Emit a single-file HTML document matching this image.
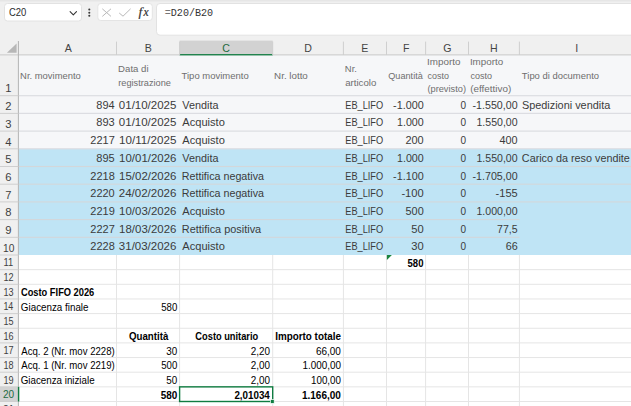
<!DOCTYPE html>
<html lang="it">
<head>
<meta charset="utf-8">
<title>Excel - Costo FIFO 2026</title>
<style>
html,body{margin:0;padding:0;background:#fff;overflow:hidden;}
body{width:631px;height:406px;font-family:"Liberation Sans",sans-serif;}
svg{display:block;font-family:"Liberation Sans",sans-serif;}
text{white-space:pre;}
</style>
</head>
<body>
<svg width="631" height="406" viewBox="0 0 631 406">
<rect x="0.00" y="0.00" width="631.00" height="406.00" fill="#ffffff" />
<rect x="0.00" y="0.00" width="631.00" height="55.00" fill="#f0f0f0" />
<rect x="0.00" y="0.00" width="631.00" height="1.50" fill="#e6e6e6" />
<rect x="4.5" y="3.5" width="77" height="17.5" rx="3" fill="#fff" stroke="#e2e2e2" stroke-width="1"/>
<text x="8.90" y="15.80" font-size="11" fill="#2b2b2b" textLength="17.30" lengthAdjust="spacingAndGlyphs">C20</text>
<path d="M70.1 11.6 L73.3 14.9 L76.5 11.6" fill="none" stroke="#333" stroke-width="1.05" stroke-linecap="round" stroke-linejoin="round"/>
<circle cx="89.3" cy="9.5" r="1.05" fill="#3a3a3a"/>
<circle cx="89.3" cy="12.7" r="1.05" fill="#3a3a3a"/>
<circle cx="89.3" cy="15.8" r="1.05" fill="#3a3a3a"/>
<rect x="97.8" y="3.5" width="54.5" height="17" rx="3" fill="#fff" stroke="#e4e4e4" stroke-width="1"/>
<path d="M102.3 8.8 L111 16.4 M111 8.8 L102.3 16.4" fill="none" stroke="#b9b9b9" stroke-width="1"/>
<path d="M119.2 13 L123 16.2 L130.6 8.8" fill="none" stroke="#b9b9b9" stroke-width="1"/>
<text x="138.40" y="16.00" font-size="13.5" fill="#333" font-style="italic" font-family="Liberation Serif, sans-serif" stroke="#333" stroke-width="0.2">f</text>
<text x="143.40" y="16.00" font-size="11.5" fill="#333" font-style="italic" font-family="Liberation Serif, sans-serif" stroke="#333" stroke-width="0.2">x</text>
<rect x="156.5" y="3.5" width="490" height="31.7" rx="3.5" fill="#fff" stroke="#e2e2e2" stroke-width="1"/>
<text x="164.80" y="15.60" font-size="10.7" fill="#333" textLength="48.30" lengthAdjust="spacingAndGlyphs" font-family="Liberation Mono, monospace"><tspan fill="#777">=</tspan>D20/B20</text>
<rect x="0.00" y="41.00" width="631.00" height="14.00" fill="#f0f0f0" />
<rect x="179.60" y="40.60" width="93.10" height="14.40" fill="#d2d2d2" />
<rect x="0.00" y="54.50" width="631.00" height="1.20" fill="#bfbfbf" />
<rect x="179.60" y="54.10" width="93.10" height="1.70" fill="#107c41" />
<rect x="18.00" y="41.60" width="1.00" height="13.40" fill="#cfcfcf" />
<rect x="116.00" y="41.60" width="1.00" height="13.40" fill="#cfcfcf" />
<rect x="179.10" y="41.60" width="1.00" height="13.40" fill="#cfcfcf" />
<rect x="272.20" y="41.60" width="1.00" height="13.40" fill="#cfcfcf" />
<rect x="342.90" y="41.60" width="1.00" height="13.40" fill="#cfcfcf" />
<rect x="386.00" y="41.60" width="1.00" height="13.40" fill="#cfcfcf" />
<rect x="425.10" y="41.60" width="1.00" height="13.40" fill="#cfcfcf" />
<rect x="468.00" y="41.60" width="1.00" height="13.40" fill="#cfcfcf" />
<rect x="518.90" y="41.60" width="1.00" height="13.40" fill="#cfcfcf" />
<path d="M6.9 52.8 L16.6 52.8 L16.6 43.6 Z" fill="#b7b7b7"/>
<text x="68.20" y="51.90" font-size="10.6" fill="#444" text-anchor="middle">A</text>
<text x="148.20" y="51.90" font-size="10.6" fill="#444" text-anchor="middle">B</text>
<text x="226.00" y="51.90" font-size="10.6" fill="#1e6b41" text-anchor="middle">C</text>
<text x="308.00" y="51.90" font-size="10.6" fill="#444" text-anchor="middle">D</text>
<text x="364.90" y="51.90" font-size="10.6" fill="#444" text-anchor="middle">E</text>
<text x="406.20" y="51.90" font-size="10.6" fill="#444" text-anchor="middle">F</text>
<text x="447.30" y="51.90" font-size="10.6" fill="#444" text-anchor="middle">G</text>
<text x="493.90" y="51.90" font-size="10.6" fill="#444" text-anchor="middle">H</text>
<text x="576.80" y="51.90" font-size="10.6" fill="#444" text-anchor="middle">I</text>
<rect x="0.00" y="55.50" width="18.50" height="351.00" fill="#f0f0f0" />
<rect x="0.00" y="386.85" width="18.50" height="14.65" fill="#d2d2d2" />
<rect x="18.50" y="55.50" width="612.50" height="93.30" fill="#f6f7f9" />
<rect x="18.50" y="148.80" width="612.50" height="106.20" fill="#bfe4f5" />
<rect x="18.50" y="95.10" width="612.50" height="1.20" fill="#dcdde2" />
<rect x="18.50" y="112.80" width="612.50" height="1.20" fill="#dcdde2" />
<rect x="18.50" y="130.50" width="612.50" height="1.20" fill="#dcdde2" />
<rect x="18.50" y="148.20" width="612.50" height="1.20" fill="#dcdde2" />
<rect x="18.50" y="165.95" width="612.50" height="1.10" fill="#d3d7da" />
<rect x="18.50" y="183.65" width="612.50" height="1.10" fill="#d3d7da" />
<rect x="18.50" y="201.35" width="612.50" height="1.10" fill="#d3d7da" />
<rect x="18.50" y="219.05" width="500.90" height="1.10" fill="#d3d7da" />
<rect x="18.50" y="236.75" width="500.90" height="1.10" fill="#d3d7da" />
<rect x="18.50" y="269.15" width="612.50" height="1.00" fill="#e5e5e5" />
<rect x="18.50" y="283.80" width="612.50" height="1.00" fill="#e5e5e5" />
<rect x="18.50" y="298.45" width="612.50" height="1.00" fill="#e5e5e5" />
<rect x="18.50" y="313.10" width="612.50" height="1.00" fill="#e5e5e5" />
<rect x="18.50" y="327.75" width="612.50" height="1.00" fill="#e5e5e5" />
<rect x="18.50" y="342.40" width="612.50" height="1.00" fill="#e5e5e5" />
<rect x="18.50" y="357.05" width="612.50" height="1.00" fill="#e5e5e5" />
<rect x="18.50" y="371.70" width="612.50" height="1.00" fill="#e5e5e5" />
<rect x="18.50" y="386.35" width="612.50" height="1.00" fill="#e5e5e5" />
<rect x="18.50" y="401.00" width="612.50" height="1.00" fill="#e5e5e5" />
<rect x="18.50" y="415.65" width="612.50" height="1.00" fill="#e5e5e5" />
<rect x="116.00" y="255.00" width="1.00" height="151.00" fill="#e5e5e5" />
<rect x="179.10" y="255.00" width="1.00" height="151.00" fill="#e5e5e5" />
<rect x="272.20" y="255.00" width="1.00" height="151.00" fill="#e5e5e5" />
<rect x="342.90" y="255.00" width="1.00" height="151.00" fill="#e5e5e5" />
<rect x="386.00" y="255.00" width="1.00" height="151.00" fill="#e5e5e5" />
<rect x="425.10" y="255.00" width="1.00" height="151.00" fill="#e5e5e5" />
<rect x="468.00" y="255.00" width="1.00" height="151.00" fill="#e5e5e5" />
<rect x="518.90" y="255.00" width="1.00" height="151.00" fill="#e5e5e5" />
<rect x="17.90" y="41.00" width="1.00" height="365.00" fill="#b4b4b4" />
<rect x="0.00" y="95.20" width="18.50" height="1.00" fill="#cfcfcf" />
<rect x="0.00" y="112.90" width="18.50" height="1.00" fill="#cfcfcf" />
<rect x="0.00" y="130.60" width="18.50" height="1.00" fill="#cfcfcf" />
<rect x="0.00" y="148.30" width="18.50" height="1.00" fill="#cfcfcf" />
<rect x="0.00" y="166.00" width="18.50" height="1.00" fill="#cfcfcf" />
<rect x="0.00" y="183.70" width="18.50" height="1.00" fill="#cfcfcf" />
<rect x="0.00" y="201.40" width="18.50" height="1.00" fill="#cfcfcf" />
<rect x="0.00" y="219.10" width="18.50" height="1.00" fill="#cfcfcf" />
<rect x="0.00" y="236.80" width="18.50" height="1.00" fill="#cfcfcf" />
<rect x="0.00" y="254.50" width="18.50" height="1.00" fill="#cfcfcf" />
<rect x="0.00" y="269.15" width="18.50" height="1.00" fill="#cfcfcf" />
<rect x="0.00" y="283.80" width="18.50" height="1.00" fill="#cfcfcf" />
<rect x="0.00" y="298.45" width="18.50" height="1.00" fill="#cfcfcf" />
<rect x="0.00" y="313.10" width="18.50" height="1.00" fill="#cfcfcf" />
<rect x="0.00" y="327.75" width="18.50" height="1.00" fill="#cfcfcf" />
<rect x="0.00" y="342.40" width="18.50" height="1.00" fill="#cfcfcf" />
<rect x="0.00" y="357.05" width="18.50" height="1.00" fill="#cfcfcf" />
<rect x="0.00" y="371.70" width="18.50" height="1.00" fill="#cfcfcf" />
<rect x="0.00" y="386.35" width="18.50" height="1.00" fill="#cfcfcf" />
<rect x="0.00" y="401.00" width="18.50" height="1.00" fill="#cfcfcf" />
<rect x="0.00" y="415.65" width="18.50" height="1.00" fill="#cfcfcf" />
<rect x="17.90" y="386.85" width="1.40" height="14.65" fill="#107c41" />
<text x="8.30" y="92.40" font-size="11.2" fill="#3f3f3f" text-anchor="middle">1</text>
<text x="8.30" y="110.10" font-size="11.2" fill="#3f3f3f" text-anchor="middle">2</text>
<text x="8.30" y="127.80" font-size="11.2" fill="#3f3f3f" text-anchor="middle">3</text>
<text x="8.30" y="145.50" font-size="11.2" fill="#3f3f3f" text-anchor="middle">4</text>
<text x="8.30" y="163.20" font-size="11.2" fill="#3f3f3f" text-anchor="middle">5</text>
<text x="8.30" y="180.90" font-size="11.2" fill="#3f3f3f" text-anchor="middle">6</text>
<text x="8.30" y="198.60" font-size="11.2" fill="#3f3f3f" text-anchor="middle">7</text>
<text x="8.30" y="216.30" font-size="11.2" fill="#3f3f3f" text-anchor="middle">8</text>
<text x="8.30" y="234.00" font-size="11.2" fill="#3f3f3f" text-anchor="middle">9</text>
<text x="3.10" y="251.70" font-size="11.2" fill="#3f3f3f" textLength="11.40" lengthAdjust="spacingAndGlyphs">10</text>
<text x="3.44" y="266.45" font-size="10.9" fill="#3f3f3f" textLength="9.69" lengthAdjust="spacingAndGlyphs">11</text>
<text x="3.40" y="281.10" font-size="10.9" fill="#3f3f3f" textLength="10.15" lengthAdjust="spacingAndGlyphs">12</text>
<text x="3.41" y="295.75" font-size="10.9" fill="#3f3f3f" textLength="10.09" lengthAdjust="spacingAndGlyphs">13</text>
<text x="3.42" y="310.40" font-size="10.9" fill="#3f3f3f" textLength="9.94" lengthAdjust="spacingAndGlyphs">14</text>
<text x="3.41" y="325.05" font-size="10.9" fill="#3f3f3f" textLength="10.07" lengthAdjust="spacingAndGlyphs">15</text>
<text x="3.41" y="339.70" font-size="10.9" fill="#3f3f3f" textLength="10.09" lengthAdjust="spacingAndGlyphs">16</text>
<text x="3.40" y="354.35" font-size="10.9" fill="#3f3f3f" textLength="10.15" lengthAdjust="spacingAndGlyphs">17</text>
<text x="3.41" y="369.00" font-size="10.9" fill="#3f3f3f" textLength="10.08" lengthAdjust="spacingAndGlyphs">18</text>
<text x="3.41" y="383.65" font-size="10.9" fill="#3f3f3f" textLength="10.12" lengthAdjust="spacingAndGlyphs">19</text>
<text x="2.89" y="398.30" font-size="10.9" fill="#1e6b41" textLength="11.20" lengthAdjust="spacingAndGlyphs">20</text>
<text x="2.89" y="412.95" font-size="10.9" fill="#3f3f3f" textLength="11.31" lengthAdjust="spacingAndGlyphs">21</text>
<text x="20.13" y="78.70" font-size="9.3" fill="#6e6e6e" textLength="60.66" lengthAdjust="spacingAndGlyphs">Nr. movimento</text>
<text x="118.11" y="71.80" font-size="9.3" fill="#6e6e6e" textLength="30.44" lengthAdjust="spacingAndGlyphs">Data di</text>
<text x="118.29" y="85.70" font-size="9.3" fill="#6e6e6e" textLength="52.62" lengthAdjust="spacingAndGlyphs">registrazione</text>
<text x="181.59" y="78.70" font-size="9.3" fill="#6e6e6e" textLength="67.11" lengthAdjust="spacingAndGlyphs">Tipo movimento</text>
<text x="274.11" y="78.70" font-size="9.3" fill="#6e6e6e" textLength="33.69" lengthAdjust="spacingAndGlyphs">Nr. lotto</text>
<text x="344.86" y="71.80" font-size="9.3" fill="#6e6e6e" textLength="12.07" lengthAdjust="spacingAndGlyphs">Nr.</text>
<text x="345.19" y="85.70" font-size="9.3" fill="#6e6e6e" textLength="31.12" lengthAdjust="spacingAndGlyphs">articolo</text>
<text x="388.27" y="78.70" font-size="9.3" fill="#6e6e6e" textLength="34.53" lengthAdjust="spacingAndGlyphs">Quantità</text>
<text x="427.09" y="65.30" font-size="9.3" fill="#6e6e6e" textLength="33.32" lengthAdjust="spacingAndGlyphs">Importo</text>
<text x="427.62" y="78.90" font-size="9.3" fill="#6e6e6e" textLength="21.35" lengthAdjust="spacingAndGlyphs">costo</text>
<text x="427.43" y="91.80" font-size="9.3" fill="#6e6e6e" textLength="38.55" lengthAdjust="spacingAndGlyphs">(previsto)</text>
<text x="469.90" y="65.30" font-size="9.3" fill="#6e6e6e" textLength="33.22" lengthAdjust="spacingAndGlyphs">Importo</text>
<text x="470.42" y="78.90" font-size="9.3" fill="#6e6e6e" textLength="21.56" lengthAdjust="spacingAndGlyphs">costo</text>
<text x="470.19" y="91.80" font-size="9.3" fill="#6e6e6e" textLength="41.02" lengthAdjust="spacingAndGlyphs">(effettivo)</text>
<text x="521.89" y="78.70" font-size="9.3" fill="#6e6e6e" textLength="77.20" lengthAdjust="spacingAndGlyphs">Tipo di documento</text>
<text x="96.32" y="108.75" font-size="11" fill="#3b3b3b" textLength="18.30" lengthAdjust="spacingAndGlyphs">894</text>
<text x="118.85" y="108.75" font-size="11" fill="#3b3b3b" textLength="57.53" lengthAdjust="spacingAndGlyphs">01/10/2025</text>
<text x="182.35" y="108.75" font-size="11" fill="#3b3b3b" textLength="36.05" lengthAdjust="spacingAndGlyphs">Vendita</text>
<text x="345.24" y="108.75" font-size="11" fill="#3b3b3b" textLength="37.90" lengthAdjust="spacingAndGlyphs">EB_LIFO</text>
<text x="393.12" y="108.75" font-size="11" fill="#3b3b3b" textLength="30.60" lengthAdjust="spacingAndGlyphs">-1.000</text>
<text x="460.41" y="108.75" font-size="11" fill="#3b3b3b" textLength="5.58" lengthAdjust="spacingAndGlyphs">0</text>
<text x="472.53" y="108.75" font-size="11" fill="#3b3b3b" textLength="45.09" lengthAdjust="spacingAndGlyphs">-1.550,00</text>
<text x="521.91" y="108.75" font-size="11" fill="#3b3b3b" textLength="88.39" lengthAdjust="spacingAndGlyphs">Spedizioni vendita</text>
<text x="96.32" y="126.45" font-size="11" fill="#3b3b3b" textLength="18.47" lengthAdjust="spacingAndGlyphs">893</text>
<text x="118.85" y="126.45" font-size="11" fill="#3b3b3b" textLength="57.53" lengthAdjust="spacingAndGlyphs">01/10/2025</text>
<text x="182.38" y="126.45" font-size="11" fill="#3b3b3b" textLength="42.49" lengthAdjust="spacingAndGlyphs">Acquisto</text>
<text x="345.24" y="126.45" font-size="11" fill="#3b3b3b" textLength="37.90" lengthAdjust="spacingAndGlyphs">EB_LIFO</text>
<text x="396.99" y="126.45" font-size="11" fill="#3b3b3b" textLength="26.73" lengthAdjust="spacingAndGlyphs">1.000</text>
<text x="460.41" y="126.45" font-size="11" fill="#3b3b3b" textLength="5.58" lengthAdjust="spacingAndGlyphs">0</text>
<text x="476.50" y="126.45" font-size="11" fill="#3b3b3b" textLength="41.12" lengthAdjust="spacingAndGlyphs">1.550,00</text>
<text x="90.35" y="144.15" font-size="11" fill="#3b3b3b" textLength="24.51" lengthAdjust="spacingAndGlyphs">2217</text>
<text x="119.13" y="144.15" font-size="11" fill="#3b3b3b" textLength="57.25" lengthAdjust="spacingAndGlyphs">10/11/2025</text>
<text x="182.38" y="144.15" font-size="11" fill="#3b3b3b" textLength="42.49" lengthAdjust="spacingAndGlyphs">Acquisto</text>
<text x="345.24" y="144.15" font-size="11" fill="#3b3b3b" textLength="37.90" lengthAdjust="spacingAndGlyphs">EB_LIFO</text>
<text x="405.45" y="144.15" font-size="11" fill="#3b3b3b" textLength="18.28" lengthAdjust="spacingAndGlyphs">200</text>
<text x="460.41" y="144.15" font-size="11" fill="#3b3b3b" textLength="5.58" lengthAdjust="spacingAndGlyphs">0</text>
<text x="499.55" y="144.15" font-size="11" fill="#3b3b3b" textLength="18.07" lengthAdjust="spacingAndGlyphs">400</text>
<text x="96.32" y="161.85" font-size="11" fill="#3b3b3b" textLength="18.44" lengthAdjust="spacingAndGlyphs">895</text>
<text x="119.13" y="161.85" font-size="11" fill="#3b3b3b" textLength="57.27" lengthAdjust="spacingAndGlyphs">10/01/2026</text>
<text x="182.35" y="161.85" font-size="11" fill="#3b3b3b" textLength="36.05" lengthAdjust="spacingAndGlyphs">Vendita</text>
<text x="345.24" y="161.85" font-size="11" fill="#3b3b3b" textLength="37.90" lengthAdjust="spacingAndGlyphs">EB_LIFO</text>
<text x="396.99" y="161.85" font-size="11" fill="#3b3b3b" textLength="26.73" lengthAdjust="spacingAndGlyphs">1.000</text>
<text x="460.41" y="161.85" font-size="11" fill="#3b3b3b" textLength="5.58" lengthAdjust="spacingAndGlyphs">0</text>
<text x="476.50" y="161.85" font-size="11" fill="#3b3b3b" textLength="41.12" lengthAdjust="spacingAndGlyphs">1.550,00</text>
<text x="521.85" y="161.85" font-size="11" fill="#3b3b3b" textLength="107.93" lengthAdjust="spacingAndGlyphs">Carico da reso vendite</text>
<text x="90.35" y="179.55" font-size="11" fill="#3b3b3b" textLength="24.43" lengthAdjust="spacingAndGlyphs">2218</text>
<text x="119.13" y="179.55" font-size="11" fill="#3b3b3b" textLength="57.27" lengthAdjust="spacingAndGlyphs">15/02/2026</text>
<text x="181.82" y="179.55" font-size="11" fill="#3b3b3b" textLength="82.18" lengthAdjust="spacingAndGlyphs">Rettifica negativa</text>
<text x="345.24" y="179.55" font-size="11" fill="#3b3b3b" textLength="37.90" lengthAdjust="spacingAndGlyphs">EB_LIFO</text>
<text x="393.12" y="179.55" font-size="11" fill="#3b3b3b" textLength="30.60" lengthAdjust="spacingAndGlyphs">-1.100</text>
<text x="460.41" y="179.55" font-size="11" fill="#3b3b3b" textLength="5.58" lengthAdjust="spacingAndGlyphs">0</text>
<text x="472.53" y="179.55" font-size="11" fill="#3b3b3b" textLength="45.09" lengthAdjust="spacingAndGlyphs">-1.705,00</text>
<text x="90.35" y="197.25" font-size="11" fill="#3b3b3b" textLength="24.38" lengthAdjust="spacingAndGlyphs">2220</text>
<text x="118.72" y="197.25" font-size="11" fill="#3b3b3b" textLength="57.69" lengthAdjust="spacingAndGlyphs">24/02/2026</text>
<text x="181.82" y="197.25" font-size="11" fill="#3b3b3b" textLength="82.18" lengthAdjust="spacingAndGlyphs">Rettifica negativa</text>
<text x="345.24" y="197.25" font-size="11" fill="#3b3b3b" textLength="37.90" lengthAdjust="spacingAndGlyphs">EB_LIFO</text>
<text x="401.40" y="197.25" font-size="11" fill="#3b3b3b" textLength="22.33" lengthAdjust="spacingAndGlyphs">-100</text>
<text x="460.41" y="197.25" font-size="11" fill="#3b3b3b" textLength="5.58" lengthAdjust="spacingAndGlyphs">0</text>
<text x="495.61" y="197.25" font-size="11" fill="#3b3b3b" textLength="22.05" lengthAdjust="spacingAndGlyphs">-155</text>
<text x="90.35" y="214.95" font-size="11" fill="#3b3b3b" textLength="24.47" lengthAdjust="spacingAndGlyphs">2219</text>
<text x="119.13" y="214.95" font-size="11" fill="#3b3b3b" textLength="57.27" lengthAdjust="spacingAndGlyphs">10/03/2026</text>
<text x="182.38" y="214.95" font-size="11" fill="#3b3b3b" textLength="42.49" lengthAdjust="spacingAndGlyphs">Acquisto</text>
<text x="345.24" y="214.95" font-size="11" fill="#3b3b3b" textLength="37.90" lengthAdjust="spacingAndGlyphs">EB_LIFO</text>
<text x="405.56" y="214.95" font-size="11" fill="#3b3b3b" textLength="18.16" lengthAdjust="spacingAndGlyphs">500</text>
<text x="460.41" y="214.95" font-size="11" fill="#3b3b3b" textLength="5.58" lengthAdjust="spacingAndGlyphs">0</text>
<text x="476.50" y="214.95" font-size="11" fill="#3b3b3b" textLength="41.12" lengthAdjust="spacingAndGlyphs">1.000,00</text>
<text x="90.35" y="232.65" font-size="11" fill="#3b3b3b" textLength="24.51" lengthAdjust="spacingAndGlyphs">2227</text>
<text x="119.13" y="232.65" font-size="11" fill="#3b3b3b" textLength="57.27" lengthAdjust="spacingAndGlyphs">18/03/2026</text>
<text x="181.81" y="232.65" font-size="11" fill="#3b3b3b" textLength="79.39" lengthAdjust="spacingAndGlyphs">Rettifica positiva</text>
<text x="345.24" y="232.65" font-size="11" fill="#3b3b3b" textLength="37.90" lengthAdjust="spacingAndGlyphs">EB_LIFO</text>
<text x="411.25" y="232.65" font-size="11" fill="#3b3b3b" textLength="12.49" lengthAdjust="spacingAndGlyphs">50</text>
<text x="460.41" y="232.65" font-size="11" fill="#3b3b3b" textLength="5.58" lengthAdjust="spacingAndGlyphs">0</text>
<text x="497.06" y="232.65" font-size="11" fill="#3b3b3b" textLength="20.59" lengthAdjust="spacingAndGlyphs">77,5</text>
<text x="90.35" y="250.35" font-size="11" fill="#3b3b3b" textLength="24.43" lengthAdjust="spacingAndGlyphs">2228</text>
<text x="118.86" y="250.35" font-size="11" fill="#3b3b3b" textLength="57.54" lengthAdjust="spacingAndGlyphs">31/03/2026</text>
<text x="182.38" y="250.35" font-size="11" fill="#3b3b3b" textLength="42.49" lengthAdjust="spacingAndGlyphs">Acquisto</text>
<text x="345.24" y="250.35" font-size="11" fill="#3b3b3b" textLength="37.90" lengthAdjust="spacingAndGlyphs">EB_LIFO</text>
<text x="411.27" y="250.35" font-size="11" fill="#3b3b3b" textLength="12.46" lengthAdjust="spacingAndGlyphs">30</text>
<text x="460.41" y="250.35" font-size="11" fill="#3b3b3b" textLength="5.58" lengthAdjust="spacingAndGlyphs">0</text>
<text x="505.65" y="250.35" font-size="11" fill="#3b3b3b" textLength="12.02" lengthAdjust="spacingAndGlyphs">66</text>
<path d="M386.9 255.1 L391.9 255.1 L386.9 260.1 Z" fill="#1a8440"/>
<text x="407.56" y="266.70" font-size="10.4" fill="#000" textLength="15.88" lengthAdjust="spacingAndGlyphs" font-weight="bold">580</text>
<text x="20.97" y="296.00" font-size="10.4" fill="#000" textLength="73.32" lengthAdjust="spacingAndGlyphs" font-weight="bold">Costo FIFO 2026</text>
<text x="20.86" y="310.65" font-size="10.4" fill="#000" textLength="67.63" lengthAdjust="spacingAndGlyphs">Giacenza finale</text>
<text x="161.26" y="310.65" font-size="10.4" fill="#000" textLength="16.06" lengthAdjust="spacingAndGlyphs">580</text>
<text x="128.95" y="339.95" font-size="10.4" fill="#000" textLength="39.37" lengthAdjust="spacingAndGlyphs" font-weight="bold">Quantità</text>
<text x="195.37" y="339.95" font-size="10.4" fill="#000" textLength="62.84" lengthAdjust="spacingAndGlyphs" font-weight="bold">Costo unitario</text>
<text x="275.19" y="339.95" font-size="10.4" fill="#000" textLength="65.70" lengthAdjust="spacingAndGlyphs" font-weight="bold">Importo totale</text>
<text x="21.23" y="354.60" font-size="10.4" fill="#000" textLength="93.51" lengthAdjust="spacingAndGlyphs">Acq. 2 (Nr. mov 2228)</text>
<text x="21.23" y="369.25" font-size="10.4" fill="#000" textLength="93.51" lengthAdjust="spacingAndGlyphs">Acq. 1 (Nr. mov 2219)</text>
<text x="20.76" y="383.90" font-size="10.4" fill="#000" textLength="73.83" lengthAdjust="spacingAndGlyphs">Giacenza iniziale</text>
<text x="166.37" y="354.60" font-size="10.4" fill="#000" textLength="10.96" lengthAdjust="spacingAndGlyphs">30</text>
<text x="161.26" y="369.25" font-size="10.4" fill="#000" textLength="16.06" lengthAdjust="spacingAndGlyphs">500</text>
<text x="166.35" y="383.90" font-size="10.4" fill="#000" textLength="10.98" lengthAdjust="spacingAndGlyphs">50</text>
<text x="160.74" y="398.55" font-size="10.4" fill="#000" textLength="16.61" lengthAdjust="spacingAndGlyphs" font-weight="bold">580</text>
<text x="250.85" y="354.60" font-size="10.4" fill="#000" textLength="19.29" lengthAdjust="spacingAndGlyphs">2,20</text>
<text x="250.85" y="369.25" font-size="10.4" fill="#000" textLength="19.29" lengthAdjust="spacingAndGlyphs">2,00</text>
<text x="250.85" y="383.90" font-size="10.4" fill="#000" textLength="19.29" lengthAdjust="spacingAndGlyphs">2,00</text>
<text x="234.41" y="398.55" font-size="10.4" fill="#000" textLength="35.39" lengthAdjust="spacingAndGlyphs" font-weight="bold">2,01034</text>
<text x="315.94" y="354.60" font-size="10.4" fill="#000" textLength="25.00" lengthAdjust="spacingAndGlyphs">66,00</text>
<text x="302.40" y="369.25" font-size="10.4" fill="#000" textLength="38.54" lengthAdjust="spacingAndGlyphs">1.000,00</text>
<text x="311.00" y="383.90" font-size="10.4" fill="#000" textLength="29.93" lengthAdjust="spacingAndGlyphs">100,00</text>
<text x="301.92" y="398.55" font-size="10.4" fill="#000" textLength="39.04" lengthAdjust="spacingAndGlyphs" font-weight="bold">1.166,00</text>
<rect x="179.60" y="386.85" width="93.10" height="14.65" fill="none" stroke="#107c41" stroke-width="1.4"/>
<rect x="270.40" y="399.60" width="3.8" height="3.8" fill="#107c41" stroke="#fff" stroke-width="0.7"/>
</svg>
</body>
</html>
